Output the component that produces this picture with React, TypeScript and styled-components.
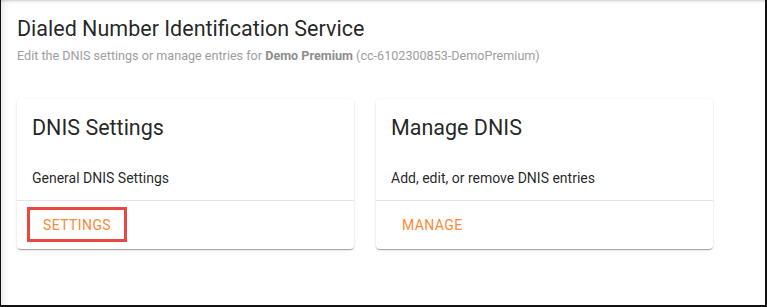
import React from "react";
import styled, { createGlobalStyle } from "styled-components";

const Global = createGlobalStyle`
  html, body { margin: 0; padding: 0; background: #fff; }
  body { font-family: Roboto, "Liberation Sans", Arial, sans-serif; }
  * { box-sizing: border-box; }
`;

const Frame = styled.div`
  width: 767px;
  height: 307px;
  background: #fff;
  border-left: 1px solid #111;
  border-right: 2px solid #111;
  border-bottom: 2px solid #111;
  box-shadow: inset 0 3px 3px -2px rgba(0, 0, 0, 0.22),
    inset 9px 0 8px -8px rgba(0, 0, 0, 0.12);
  padding: 13px 16px 0 16px;
  overflow: hidden;
`;

const Title = styled.h1`
  margin: 0;
  font-size: 21.5px;
  line-height: 32px;
  font-weight: 400;
  color: rgba(0, 0, 0, 0.87);
`;

const Subtitle = styled.p`
  margin: 3px 0 0 0;
  font-size: 12.6px;
  line-height: 16px;
  color: #9e9e9e;
  b {
    font-weight: 700;
    color: #8d8d8d;
  }
`;

const CardRow = styled.div`
  display: flex;
  gap: 22px;
  margin-top: 35px;
`;

const Card = styled.div`
  width: 337px;
  height: 150px;
  background: #fff;
  border-radius: 4px;
  box-shadow: 0 2px 1px -1px rgba(0, 0, 0, 0.2), 0 1px 1px 0 rgba(0, 0, 0, 0.14),
    0 1px 3px 0 rgba(0, 0, 0, 0.12);
  display: flex;
  flex-direction: column;
`;

const CardBody = styled.div`
  padding: 13px 15px 0 15px;
  height: 102px;
  border-bottom: 1px solid #e3e3e3;
`;

const CardTitle = styled.h2`
  margin: 0;
  font-size: 21.5px;
  line-height: 32px;
  font-weight: 400;
  color: rgba(0, 0, 0, 0.87);
`;

const CardText = styled.p`
  margin: 24px 0 0 0;
  font-size: 14px;
  line-height: 20px;
  color: rgba(0, 0, 0, 0.87);
`;

const CardActions = styled.div`
  display: flex;
  align-items: center;
  padding: 4px 10px;
  height: 47px;
`;

const ActionButton = styled.button<{ $highlight?: boolean }>`
  font-family: Roboto, "Liberation Sans", Arial, sans-serif;
  font-size: 14px;
  font-weight: 400;
  letter-spacing: 0.4px;
  text-transform: uppercase;
  color: #f98a36;
  background: transparent;
  border: 3px solid ${(p) => (p.$highlight ? "#e8483f" : "transparent")};
  height: 35px;
  padding: 0 13px;
  cursor: pointer;
  display: flex;
  align-items: center;
`;

const cards = [
  { title: "DNIS Settings", text: "General DNIS Settings", action: "Settings", highlight: true },
  { title: "Manage DNIS", text: "Add, edit, or remove DNIS entries", action: "Manage", highlight: false },
];

export default function App() {
  return (
    <>
      <Global />
      <Frame>
        <Title>Dialed Number Identification Service</Title>
        <Subtitle>
          Edit the DNIS settings or manage entries for <b>Demo Premium</b> (cc-6102300853-DemoPremium)
        </Subtitle>
        <CardRow>
          {cards.map((c) => (
            <Card key={c.title}>
              <CardBody>
                <CardTitle>{c.title}</CardTitle>
                <CardText>{c.text}</CardText>
              </CardBody>
              <CardActions>
                <ActionButton $highlight={c.highlight}>{c.action}</ActionButton>
              </CardActions>
            </Card>
          ))}
        </CardRow>
      </Frame>
    </>
  );
}
